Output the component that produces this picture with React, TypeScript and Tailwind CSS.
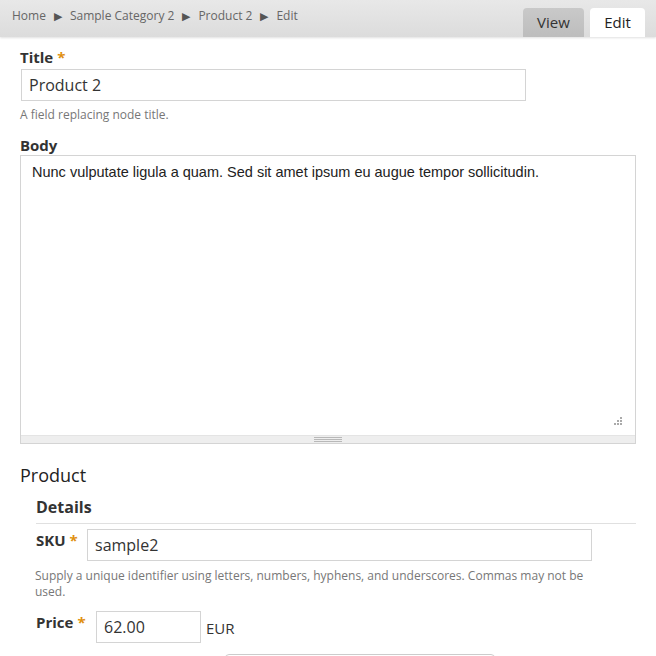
import React from 'react';

const Req = () => <span className="text-[#e09010] ml-1">*</span>;

const Crumb = ({ children, last }: { children: React.ReactNode; last?: boolean }) => (
    <>
        <span>{children}</span>
        {!last && <span className="text-[11px] text-[#555] mx-[8px]">▶</span>}
    </>
);

export default function App() {
    return (
        <div className="w-[656px] h-[656px] overflow-hidden bg-white text-[#333] font-['Open_Sans',sans-serif]">
            {/* Header */}
            <div className="h-[37px] bg-gradient-to-b from-[#e8e8e8] to-[#dcdcdc] shadow-[0_1px_2px_rgba(0,0,0,0.12)] flex items-start justify-between pl-[12px] pr-[11px]">
                <div className="flex items-center pt-[6px] text-[12px] text-[#666] leading-[20px]">
                    <Crumb>Home</Crumb>
                    <Crumb>Sample Category 2</Crumb>
                    <Crumb>Product 2</Crumb>
                    <Crumb last>Edit</Crumb>
                </div>
                <div className="flex items-end gap-[6px] h-full pt-[8px]">
                    <div className="w-[61px] h-[29px] rounded-t-[4px] bg-gradient-to-b from-[#c9c9c9] to-[#bdbdbd] text-[#333] text-[15px] flex items-center justify-center">View</div>
                    <div className="w-[55px] h-[29px] rounded-t-[4px] bg-white text-[#222] text-[15px] flex items-center justify-center">Edit</div>
                </div>
            </div>

            <div className="pl-[20px] pr-[20px]">
                {/* Title */}
                <div className="mt-[10px] text-[15px] font-bold leading-[20px]">Title<Req /></div>
                <div className="mt-[2px] ml-[1px] w-[505px] h-[32px] border border-[#d4d4d4] flex items-center px-[7px] text-[16px] text-[#333]">Product 2</div>
                <div className="mt-[5px] text-[12px] text-[#777] leading-[18px]">A field replacing node title.</div>

                {/* Body */}
                <div className="mt-[11px] text-[15px] font-bold leading-[20px]">Body</div>
                <div className="w-[616px] h-[289px] border border-[#d4d4d4] flex flex-col">
                    <div className="flex-1 relative px-[11px] pt-[6px] text-[14.5px] text-[#222] font-['Liberation_Sans',Arial,sans-serif]">
                        Nunc vulputate ligula a quam. Sed sit amet ipsum eu augue tempor sollicitudin.
                        <svg className="absolute right-[12px] bottom-[8px]" width="10" height="10" viewBox="0 0 10 10" fill="#aaa">
                            <rect x="7" y="0" width="2" height="2" />
                            <rect x="4" y="3" width="2" height="2" />
                            <rect x="7" y="3" width="2" height="2" />
                            <rect x="1" y="6" width="2" height="2" />
                            <rect x="4" y="6" width="2" height="2" />
                            <rect x="7" y="6" width="2" height="2" />
                        </svg>
                    </div>
                    <div className="h-[8px] bg-[#eeeeee] border-t border-[#e4e4e4] flex items-center justify-center">
                        <div className="w-[28px] flex flex-col gap-[1px]">
                            <div className="h-px bg-[#b8b8b8]" />
                            <div className="h-px bg-[#b8b8b8]" />
                            <div className="h-px bg-[#b8b8b8]" />
                        </div>
                    </div>
                </div>

                {/* Product */}
                <div className="mt-[19px] text-[18px] leading-[24px] text-[#222]">Product</div>
                <div className="ml-[16px] mt-[9px]">
                    <div className="text-[16px] font-bold leading-[22px] text-[#333] pb-[5px] border-b border-[#e0e0e0]">Details</div>
                    <div className="flex items-start mt-[5px]">
                        <div className="text-[15px] font-bold leading-[20px] pt-[1px] w-[51px]">SKU<Req /></div>
                        <div className="w-[505px] h-[32px] border border-[#d4d4d4] flex items-center px-[7px] text-[16px] text-[#333]">sample2</div>
                    </div>
                    <div className="mt-[7px] text-[12px] text-[#777] leading-[16px] pr-[20px] -ml-[1px]">Supply a unique identifier using letters, numbers, hyphens, and underscores. Commas may not be used.</div>
                    <div className="flex items-start mt-[11px]">
                        <div className="text-[15px] font-bold leading-[20px] pt-[1px] w-[60px]">Price<Req /></div>
                        <div className="w-[105px] h-[32px] border border-[#d4d4d4] flex items-center px-[7px] text-[16px] text-[#333]">62.00</div>
                        <div className="ml-[5px] pt-[7px] text-[15px] text-[#333] leading-[20px]">EUR</div>
                    </div>
                    <div className="ml-[189px] mt-[11px] w-[270px] h-[20px] border border-[#ccc] rounded-[4px]" />
                </div>
            </div>
        </div>
    );
}
